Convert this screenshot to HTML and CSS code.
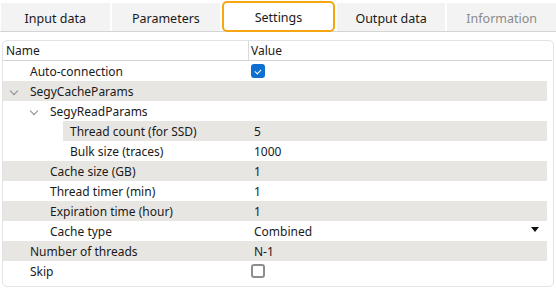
FILE: index.html
```html
<!DOCTYPE html>
<html lang="en">

<head>
    <meta charset="UTF-8">
    <title>Settings</title>
    <link rel="stylesheet" href="styles.css">
</head>

<body>
    <div class="tabs">
        <div class="tab">Input data</div>
        <div class="tab">Parameters</div>
        <div class="tab active">Settings</div>
        <div class="tab">Output data</div>
        <div class="tab disabled">Information</div>
    </div>

    <div class="panel">
        <div class="header">
            <div class="name">Name</div>
            <div class="value">Value</div>
        </div>

        <div class="row">
            <div class="name lvl0">Auto-connection</div>
            <div class="value"><span class="check on"></span></div>
        </div>
        <div class="row alt">
            <div class="name lvl0"><span class="chev"></span>SegyCacheParams</div>
            <div class="value"></div>
        </div>
        <div class="row">
            <div class="name lvl1"><span class="chev"></span>SegyReadParams</div>
            <div class="value"></div>
        </div>
        <div class="row alt deep">
            <div class="gap"></div>
            <div class="name lvl2">Thread count (for SSD)</div>
            <div class="value num">5</div>
        </div>
        <div class="row">
            <div class="name lvl2">Bulk size (traces)</div>
            <div class="value num">1000</div>
        </div>
        <div class="row alt">
            <div class="name lvl1">Cache size (GB)</div>
            <div class="value num">1</div>
        </div>
        <div class="row">
            <div class="name lvl1">Thread timer (min)</div>
            <div class="value num">1</div>
        </div>
        <div class="row alt">
            <div class="name lvl1">Expiration time (hour)</div>
            <div class="value num">1</div>
        </div>
        <div class="row">
            <div class="name lvl1">Cache type</div>
            <div class="value combo">Combined<span class="arrow"></span></div>
        </div>
        <div class="row alt">
            <div class="name lvl0">Number of threads</div>
            <div class="value num">N-1</div>
        </div>
        <div class="row">
            <div class="name lvl0">Skip</div>
            <div class="value"><span class="check"></span></div>
        </div>
    </div>
</body>

</html>
```

FILE: styles.css
```css
body {
    margin: 0;
    font-family: 'Noto Sans', sans-serif;
    font-size: 12px;
    color: #1a1a1a;
    background-color: #fff;
}

.tabs {
    display: flex;
    gap: 2px;
    padding: 2px 0 0 1px;
    height: 29px;
    border-bottom: 1px solid #d4d4d4;
}

.tab {
    flex: 1;
    display: flex;
    justify-content: center;
    align-items: center;
    background-color: #f3f3f3;
    font-size: 12.5px;
    margin-top: 1px;
    padding-top: 2px;
}

.tab.active {
    background-color: #fff;
    border: 2px solid #f5a712;
    border-radius: 5px;
    margin-top: -1px;
    margin-bottom: -1px;
}

.tab.disabled {
    color: #8a8a8a;
}

.panel {
    margin: 8px 2px 0 2px;
    height: 245px;
    border: 1px solid #e3e3e3;
    border-radius: 5px;
    padding-right: 6px;
}

.header {
    display: flex;
    height: 19px;
    border-bottom: 1px solid #d6d6d6;
    margin-right: -5px;
}

.header .name {
    width: 242px;
    padding-left: 3px;
    border-right: 1px solid #d9d9d9;
}

.header .value {
    padding-left: 2px;
}

.header div {
    display: flex;
    align-items: center;
}

.row {
    display: flex;
    height: 20px;
    align-items: center;
}

.row.alt {
    background-color: #e8e6e3;
}

.row .name {
    width: 245px;
    display: flex;
    align-items: center;
    position: relative;
}

.row .value {
    flex: 1;
    display: flex;
    align-items: center;
    padding-left: 3px;
    height: 100%;
}

.row .num,
.row .combo {
    padding-left: 6px;
}

.lvl0 {
    padding-left: 27px;
    box-sizing: border-box;
}

.lvl1 {
    padding-left: 47px;
    box-sizing: border-box;
}

.lvl2 {
    padding-left: 67px;
    box-sizing: border-box;
}

.deep .gap {
    width: 60px;
    height: 100%;
    background-color: #fff;
}

.deep .lvl2 {
    width: 185px;
    padding-left: 7px;
}

.chev {
    position: absolute;
    width: 5px;
    height: 5px;
    border-right: 1px solid #8c8c8c;
    border-bottom: 1px solid #8c8c8c;
    transform: rotate(45deg);
    top: 5px;
}

.lvl0 .chev {
    left: 8px;
}

.lvl1 .chev {
    left: 28px;
}

.check {
    width: 10px;
    height: 10px;
    border: 2px solid #8d8d8d;
    border-radius: 3px;
    position: relative;
}

.check.on {
    width: 14px;
    height: 14px;
    border: none;
    background-color: #0f6fd1;
}

.check.on::after {
    content: '';
    position: absolute;
    left: 5px;
    top: 4px;
    width: 3px;
    height: 5px;
    border-right: 1px solid #fff;
    border-bottom: 1px solid #fff;
    transform: rotate(45deg);
}

.combo {
    position: relative;
}

.arrow {
    position: absolute;
    right: 8px;
    top: 6px;
    border-left: 4px solid transparent;
    border-right: 4px solid transparent;
    border-top: 5px solid #111;
}
```
